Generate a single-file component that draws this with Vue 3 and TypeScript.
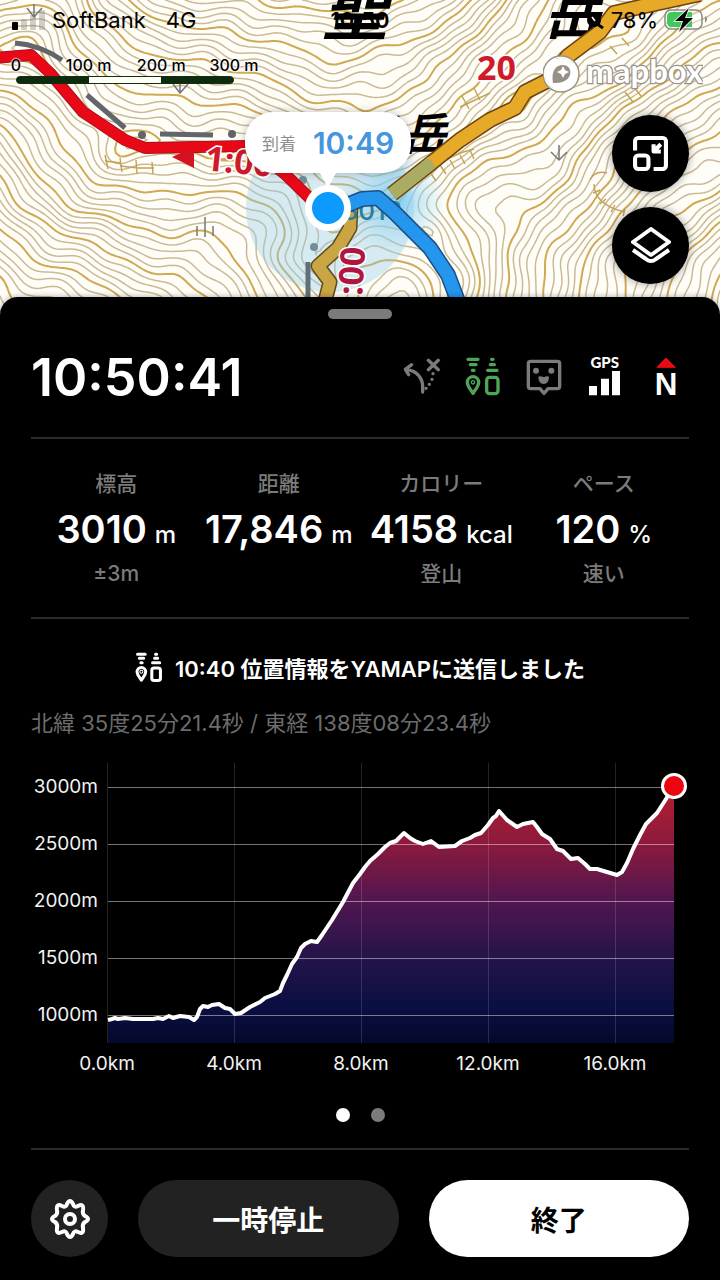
<script setup lang="ts">
type Point = [number, number]

interface Stat {
  label: string
  value: string
  unit: string
  note: string
}

const stats: Stat[] = [
  { label: '標高', value: '3010', unit: 'm', note: '±3m' },
  { label: '距離', value: '17,846', unit: 'm', note: '' },
  { label: 'カロリー', value: '4158', unit: 'kcal', note: '登山' },
  { label: 'ペース', value: '120', unit: '%', note: '速い' },
]

/* Elevation profile */
const profile: Point[] = [
  [108, 1020], [112, 1019], [115, 1018], [118, 1019], [125, 1018], [133, 1019], [153, 1019], [158, 1018], [163, 1019],
  [169, 1016], [173, 1018], [180, 1016], [189, 1017], [194, 1020], [197, 1017], [200, 1009], [203, 1006],
  [208, 1007], [212, 1005], [219, 1004], [225, 1008], [230, 1009], [235, 1014], [241, 1013], [250, 1007],
  [260, 1002], [265, 998], [275, 994], [280, 991], [283, 983], [287, 975], [292, 964], [297, 957],
  [301, 948], [305, 944], [311, 941], [317, 942], [322, 935], [332, 920], [343, 902], [353, 883],
  [360, 874], [365, 867], [370, 861], [378, 854], [385, 847], [390, 843], [396, 841], [404, 833],
  [410, 838], [415, 841], [423, 844], [431, 841], [439, 847], [455, 846], [462, 841], [470, 838],
  [475, 835], [481, 833], [488, 825], [493, 818], [496, 816], [499, 811], [507, 820], [517, 827],
  [523, 824], [533, 822], [537, 827], [542, 834], [550, 839], [557, 849], [563, 851], [571, 859],
  [578, 858], [585, 864], [590, 869], [597, 869], [617, 875], [622, 872], [627, 863], [633, 849],
  [640, 835], [646, 824], [657, 813], [666, 799], [674, 786],
]
const profileLine = 'M' + profile.map((p) => p.join(' ')).join('L')
const profileArea = profileLine + 'V1043H108Z'
const yTicks = [3000, 2500, 2000, 1500, 1000].map((m, i) => ({ text: `${m}m`, y: 787 + i * 57 }))
const xTicks = [0, 4, 8, 12, 16].map((km, i) => ({ text: `${km.toFixed(1)}km`, x: 107 + i * 127 }))

/* Contour lines: level curves of a terrain that falls away from the ridges */
const ridges: Point[][] = [
  [[-60, 40], [30, 55], [140, 150], [250, 150], [335, 205], [400, 190], [515, 108], [610, 20], [760, -50]],
  [[345, 210], [320, 265], [335, 340]],
  [[400, 190], [430, 240], [470, 330]],
]

function segmentDistance(x: number, y: number, a: Point, b: Point): number {
  const dx = b[0] - a[0]
  const dy = b[1] - a[1]
  const t = Math.max(0, Math.min(1, ((x - a[0]) * dx + (y - a[1]) * dy) / (dx * dx + dy * dy)))
  return Math.hypot(x - a[0] - t * dx, y - a[1] - t * dy)
}

function terrain(px: number, py: number): number {
  const x = px + 8 * Math.sin(py / 25 + px / 70) + 2 * Math.sin(py / 8 + 1)
  const y = py + 8 * Math.sin(px / 27 + py / 60) + 2 * Math.sin(px / 9 + py / 14)
  let sum = 0
  ridges.forEach((ridge, r) => {
    for (let i = 1; i < ridge.length; i++) {
      sum += Math.exp(-(segmentDistance(x, y, ridge[i - 1], ridge[i]) + (r ? 16 : 0)) / 16)
    }
  })
  const rough = 5 * Math.sin(px / 36 + 2) * Math.cos(py / 31) + 2 * Math.sin(px / 14 + py / 18) + Math.sin(px / 7 - py / 9)
  return -16 * Math.log(sum) + rough
}

function contours(): { thin: string; thick: string } {
  const step = 4
  const gap = 7
  const cols = 181
  const rows = 81
  const grid: number[][] = []
  for (let j = 0; j < rows; j++) {
    grid.push(Array.from({ length: cols }, (_, i) => terrain(i * step, j * step)))
  }
  let thin = ''
  let thick = ''
  for (let j = 0; j < rows - 1; j++) {
    for (let i = 0; i < cols - 1; i++) {
      const v = [grid[j][i], grid[j][i + 1], grid[j + 1][i + 1], grid[j + 1][i]]
      const c: Point[] = [[i, j], [i + 1, j], [i + 1, j + 1], [i, j + 1]]
      const low = Math.ceil(Math.min(...v) / gap)
      const high = Math.floor(Math.max(...v) / gap)
      for (let n = low; n <= high; n++) {
        const hits: string[] = []
        for (let e = 0; e < 4; e++) {
          const f = (e + 1) % 4
          if (v[e] < n * gap !== v[f] < n * gap) {
            const t = (n * gap - v[e]) / (v[f] - v[e])
            const x = (c[e][0] + t * (c[f][0] - c[e][0])) * step
            const y = (c[e][1] + t * (c[f][1] - c[e][1])) * step
            hits.push(`${x.toFixed(1)} ${y.toFixed(1)}`)
          }
        }
        for (let h = 0; h + 1 < hits.length; h += 2) {
          const part = `M${hits[h]}L${hits[h + 1]}`
          if (n % 5 === 0) thick += part
          else thin += part
        }
      }
    }
  }
  return { thin, thick }
}
const lines = contours()

const orangeRoute = 'M700 -6L640 7L614 13L600 32L568 56L549 80L525 92L515 108L490 120L460 140L425 168L392 194'
const southRoute = 'M351 205L350 228L338 248L318 266L330 282L324 305'
const blueRoute = 'M340 208L362 199L378 198L395 213L413 231L430 248L448 275L462 312'
const redRoute = 'M-5 58L31 55L50 73L83 112L125 140L145 148L250 146L285 174L330 218'
</script>

<template>
  <main class="screen">
    <section class="map" aria-label="地図">
      <svg class="terrain" viewBox="0 0 720 320" preserveAspectRatio="xMidYMin slice">
        <defs>
          <radialGradient id="heading">
            <stop offset="0" stop-color="#6fc8f5" stop-opacity="0.8" />
            <stop offset="1" stop-color="#8fd4f7" stop-opacity="0" />
          </radialGradient>
        </defs>
        <rect width="720" height="320" fill="#fffdf8" />
        <path :d="lines.thin" class="contour" stroke="#cbbb94" stroke-width="1.5" />
        <path :d="lines.thick" class="contour" stroke="#d0a955" stroke-width="2" />
        <g fill="none" stroke="#c5a050" stroke-width="1.4">
          <path d="M590 180q5-10 17-7M594 184q0 20 30 28M600 190l-7 3M606 199l-6 5M615 205l-4 7M625 209l-2 7" />
          <path d="M430 172l6 9M440 165l6 9M450 160l5 9M460 155l5 9M470 150l4 9M430 172q20-18 44-23M462 96l7 13M474 88l6 12M460 107l30-14" />
          <path d="M105 155l3 14M120 158l2 14M136 160l1 14M152 162l1 12M105 161l16 2M120 166l18 2M136 168l18 0" />
          <path d="M625 92l8 10M633 86l8 10M560 60l7 8M610 46l7 8M622 38l7 8" />
        </g>
        <g fill="none" stroke="#77777a" stroke-width="1.5">
          <path d="M34 4v13M27 8l7 9l8-9M180 76v17M173 84l7 9l8-9M559 145v15M551 152l8 8l8-8M197 226v10M205 217v20M213 226v10" />
        </g>
        <g fill="none" stroke="#62666a" stroke-width="5">
          <path d="M15 43Q40 45 62 60M87 95L125 128M160 134L213 135" />
        </g>
        <g fill="#62666a">
          <circle cx="142" cy="135" r="4" /><circle cx="232" cy="134" r="4" />
          <circle cx="303" cy="180" r="4" /><circle cx="314" cy="247" r="4" />
        </g>
        <circle cx="330" cy="208" r="84" fill="#93cbe6" fill-opacity="0.38" />
        <circle cx="395" cy="202" r="52" fill="url(#heading)" />
        <g class="place">
          <text x="322" y="34" font-size="66">聖</text>
          <text x="544" y="34" font-size="56">岳</text>
          <text x="298" y="150" font-size="44">前</text>
          <text x="350" y="150" font-size="44">聖</text>
          <text x="402" y="150" font-size="44">岳</text>
        </g>
        <path d="M308 262V300" stroke="#607078" stroke-width="5" />
        <g fill="none" stroke-linejoin="round">
          <path :d="redRoute" stroke="#a81220" stroke-width="12" />
          <path :d="redRoute" stroke="#e90816" stroke-width="10" />
          <path :d="orangeRoute" stroke="#70430e" stroke-width="16" />
          <path :d="orangeRoute" stroke="#e7a928" stroke-width="13" />
          <path d="M432 162L425 168L392 194" stroke="#a9ac62" stroke-width="13" />
          <path :d="southRoute" stroke="#5f4a1c" stroke-width="15" />
          <path :d="southRoute" stroke="#c9a544" stroke-width="12" />
        </g>
        <text x="342" y="220" class="height">3013</text>
        <g fill="none" stroke-linejoin="round">
          <path :d="blueRoute" stroke="#1c4f82" stroke-width="16" />
          <path :d="blueRoute" stroke="#2596ee" stroke-width="13" />
        </g>
        <path d="M172 157L194 147V168Z" fill="#d5121f" />
        <g class="time">
          <text x="477" y="80">20</text>
          <text transform="translate(204 170) rotate(6)">1:00</text>
          <text transform="translate(362 296) rotate(-86)" class="crimson">:00</text>
        </g>
      </svg>

      <header class="status">
        <svg class="signal" viewBox="0 0 34 22" aria-hidden="true">
          <rect x="0" y="13" width="6" height="8" rx="1" />
          <g fill="#777" fill-opacity="0.35">
            <rect x="9" y="10" width="6" height="11" rx="1" />
            <rect x="18" y="6" width="6" height="15" rx="1" />
            <rect x="27" y="1" width="6" height="20" rx="1" />
          </g>
        </svg>
        <span>SoftBank</span>
        <span class="network">4G</span>
        <span class="clock-small">10:50</span>
        <svg class="lock" viewBox="0 0 18 22" aria-hidden="true">
          <circle cx="8" cy="11" r="7" />
          <path d="M11 15L17 19" stroke="#000" stroke-width="3" />
          <path d="M6 8l3 4" stroke="#fff" stroke-width="1.5" />
        </svg>
        <span class="percent">78%</span>
        <svg class="battery" viewBox="0 0 44 24" aria-hidden="true">
          <rect x="1" y="2" width="37" height="19" rx="6" fill="#fff" fill-opacity="0.4" stroke="#8b8b80" stroke-width="1.5" />
          <path d="M8 4H28V19H8Q3 19 3 14V9Q3 4 8 4Z" fill="#42c75c" />
          <path d="M41 8Q45 11 41 15Z" fill="#8b8b80" />
          <path d="M25 0L11 13H19L15 24L29 10H21Z" stroke="#fff" stroke-width="1.5" paint-order="stroke" />
        </svg>
      </header>

      <div class="scale">
        <div class="scale-labels"><span>0</span><span>100 m</span><span>200 m</span><span>300 m</span></div>
        <div class="scale-bar"><i></i><i></i><i></i></div>
      </div>

      <a class="mapbox" href="#mapbox" aria-label="mapbox">
        <svg viewBox="0 0 160 44">
          <circle cx="18" cy="22" r="16" fill="#fff" />
          <circle cx="18" cy="22" r="17" fill="none" stroke="#fff" stroke-width="2" />
          <circle cx="18" cy="22" r="18" fill="none" stroke="#9c9482" stroke-width="1.5" />
          <path d="M10 31C8 20 12 13 20 13C27 13 29 20 26 25C23 30 17 31 10 31Z" fill="#969089" />
          <path d="M20 14L22 18L26 20L22 22L20 26L18 22L14 20L18 18Z" fill="#fff" />
          <text x="43" y="31">mapbox</text>
        </svg>
      </a>

      <div class="map-tools">
        <button type="button" aria-label="縮小表示">
          <svg width="35" height="35" viewBox="0 0 34 34">
            <path d="M2 14V5a3 3 0 0 1 3-3H29a3 3 0 0 1 3 3V29a3 3 0 0 1-3 3H20" />
            <rect x="2" y="19" width="13" height="13" rx="3" />
            <path d="M20 8V15H27M20 15L27 8" />
          </svg>
        </button>
        <button type="button" aria-label="レイヤー">
          <svg width="40" height="37" viewBox="0 0 40 37">
            <path d="M20 2L38 15L20 28L2 15Z" />
            <path d="M2 23L15 32Q20 36 25 32L38 23" />
          </svg>
        </button>
      </div>

      <div class="arrival">
        <div class="bubble"><span>到着</span><strong>10:49</strong></div>
        <div class="marker"></div>
      </div>
    </section>

    <section class="sheet">
      <div class="handle"></div>

      <div class="top-row">
        <time class="clock">10:50:41</time>
        <div class="icons">
          <svg viewBox="0 0 138 138" class="line gray">
            <path d="M71 114V98C71 70 52 50 22 47M38 32L19 46L29 62" />
            <path d="M88 19L118 47M118 19L88 47" />
            <path d="M102 59v.1M99 76v.1M91 91v.1M81 103v.1" />
          </svg>
          <svg viewBox="0 0 138 138" class="line green">
            <path d="M24 16H54M31 32H48M37 49H42M95 16h4M91 32H103M83 49H111" />
            <path d="M39 118C32 106 22 98 22 85A17 17 0 0 1 56 85C56 98 46 106 39 118Z" />
            <circle cx="39" cy="85" r="2" />
            <rect x="80" y="70" width="34" height="49" rx="9" />
          </svg>
          <svg viewBox="0 0 138 138" class="line gray">
            <path d="M29 22H109Q116 22 116 29V97Q116 104 109 104H81L69 118L57 104H29Q22 104 22 97V29Q22 22 29 22Z" />
            <g fill="currentColor" stroke="none">
              <circle cx="45" cy="50" r="9" /><circle cx="91" cy="50" r="9" />
              <path d="M52 68Q58 64 68 70Q78 64 84 68Q84 88 68 90Q52 88 52 68Z" />
            </g>
          </svg>
          <svg viewBox="0 0 138 138" fill="#fff">
            <text x="68" y="43" text-anchor="middle" class="gps">GPS</text>
            <path d="M21 96H45V124H21ZM57 74H81V124H57ZM90 51H114V124H90Z" />
          </svg>
          <svg viewBox="0 0 138 138" fill="#fff">
            <path d="M69 12L42 40H97Z" fill="#e80b12" stroke="#e80b12" stroke-width="3" stroke-linejoin="round" />
            <text x="69" y="124" text-anchor="middle" class="north">N</text>
          </svg>
        </div>
      </div>

      <div class="stats">
        <div v-for="s in stats" :key="s.label" class="stat">
          <div class="stat-label">{{ s.label }}</div>
          <div class="stat-value"><b>{{ s.value }}</b><span>{{ s.unit }}</span></div>
          <div class="stat-label">{{ s.note }}</div>
        </div>
      </div>

      <div class="message">
        <svg viewBox="14 8 110 120" class="line">
          <path d="M24 16H54M31 32H48M37 49H42M95 16h4M91 32H103M83 49H111" />
          <path d="M39 118C32 106 22 98 22 85A17 17 0 0 1 56 85C56 98 46 106 39 118Z" />
          <circle cx="39" cy="85" r="2" />
          <rect x="80" y="70" width="34" height="49" rx="9" />
        </svg>
        <span>10:40 位置情報をYAMAPに送信しました</span>
      </div>
      <div class="coords">北緯 35度25分21.4秒 / 東経 138度08分23.4秒</div>

      <svg class="chart" viewBox="31 750 658 330" role="img" aria-label="標高グラフ">
        <defs>
          <linearGradient id="fill" gradientUnits="userSpaceOnUse" x1="0" y1="786" x2="0" y2="1043">
            <stop offset="0" stop-color="#b81f2c" />
            <stop offset="0.22" stop-color="#8c1a3d" />
            <stop offset="0.45" stop-color="#501650" />
            <stop offset="0.67" stop-color="#241449" />
            <stop offset="0.85" stop-color="#0b0f43" />
            <stop offset="1" stop-color="#030a2c" />
          </linearGradient>
        </defs>
        <path :d="profileArea" fill="url(#fill)" />
        <g v-for="t in xTicks" :key="t.text">
          <path :d="`M${t.x + 0.5} 763V1043`" stroke="#fff" stroke-opacity="0.14" />
          <text :x="t.x" y="1070" text-anchor="middle">{{ t.text }}</text>
        </g>
        <g v-for="t in yTicks" :key="t.text">
          <path :d="`M108 ${t.y + 0.5}H674`" stroke="#fff" stroke-opacity="0.45" />
          <text x="98" :y="t.y + 6" text-anchor="end">{{ t.text }}</text>
        </g>
        <path :d="profileLine" fill="none" stroke="#fff" stroke-width="4" stroke-linejoin="round" />
        <circle cx="674" cy="786" r="11.5" fill="#eb0511" stroke="#fff" stroke-width="3" />
      </svg>

      <div class="dots"><i class="on"></i><i></i></div>

      <div class="actions">
        <button type="button" class="settings" aria-label="設定">
          <svg viewBox="0 0 40 40">
            <path d="M17 5Q20 -1 23 5Q24 9 28 7Q34 4 33 11Q32 15 35 17Q41 20 35 23Q32 25 33 29Q34 36 28 33Q24 31 23 35Q20 41 17 35Q16 31 12 33Q6 36 7 29Q8 25 5 23Q-1 20 5 17Q8 15 7 11Q6 4 12 7Q16 9 17 5Z" />
            <circle cx="20" cy="20" r="5" />
          </svg>
        </button>
        <button type="button" class="pause">一時停止</button>
        <button type="button" class="finish">終了</button>
      </div>
    </section>
  </main>
</template>

<style>
body {
  background: #000;
}
</style>

<style scoped>
.screen {
  min-height: 100vh;
  background: #000;
  color: #fff;
  font-family: Inter, "Noto Sans CJK JP", sans-serif;
}
button {
  border: 0;
  padding: 0;
  font: inherit;
  cursor: pointer;
}
.map {
  position: relative;
  height: 317px;
  overflow: hidden;
  color: #000;
}
.terrain {
  display: block;
  width: 100%;
  height: 100%;
}
.contour {
  fill: none;
  stroke-linecap: round;
}
.place {
  font-family: "Noto Sans CJK JP", sans-serif;
  font-weight: 700;
  font-style: italic;
}
.height {
  font-size: 26px;
  font-weight: 500;
  fill: #287e9c;
}
.time {
  font-family: "Open Sans", sans-serif;
  font-weight: 700;
  font-size: 34px;
  fill: #cf1a2c;
  stroke: #fff;
  stroke-width: 3px;
  paint-order: stroke;
}
.crimson {
  fill: #b01541;
}
.status {
  position: absolute;
  inset: 0 12px auto 12px;
  display: flex;
  align-items: center;
  height: 40px;
  font-size: 22px;
}
.signal {
  width: 34px;
  height: 22px;
  margin-right: 6px;
}
.network {
  margin-left: 20px;
}
.clock-small {
  position: absolute;
  left: 50%;
  transform: translateX(-50%);
  font-weight: 600;
}
.lock {
  width: 18px;
  height: 22px;
  margin-left: auto;
}
.percent {
  margin: 0 6px 0 7px;
}
.battery {
  width: 44px;
  height: 24px;
}
.scale {
  position: absolute;
  top: 55px;
  left: 16px;
  width: 218px;
}
.scale-labels {
  display: flex;
  justify-content: space-between;
  margin: 0 -36px;
  font-size: 16px;
  font-weight: 500;
  line-height: 20px;
  text-shadow: 0 0 2px #fff, 0 0 2px #fff, 0 0 2px #fff;
}
.scale-labels span {
  width: 72px;
  text-align: center;
}
.scale-bar {
  display: grid;
  grid-template-columns: repeat(3, 1fr);
  box-sizing: border-box;
  height: 8px;
  margin-top: 1px;
  border: 1px solid #10300f;
  border-radius: 4px;
  background: #0e2b0d;
  overflow: hidden;
}
.scale-bar i:nth-child(2) {
  background: #fffdf8;
}
.mapbox {
  position: absolute;
  top: 52px;
  right: 17px;
}
.mapbox svg {
  display: block;
  width: 160px;
  height: 44px;
}
.mapbox text {
  font-family: Lato, sans-serif;
  font-weight: 700;
  font-size: 33px;
  fill: #fff;
  stroke: #96918a;
  stroke-width: 2.5px;
  paint-order: stroke;
}
.map-tools {
  position: absolute;
  top: 115px;
  right: 31px;
  display: grid;
  gap: 15px;
}
.map-tools button {
  display: grid;
  place-items: center;
  width: 77px;
  height: 77px;
  border-radius: 50%;
  background: #000;
  box-shadow: 0 0 10px rgba(0, 0, 0, 0.4);
}
.map-tools svg {
  fill: none;
  stroke: #fff;
  stroke-width: 4;
  stroke-linejoin: round;
}
.arrival {
  position: absolute;
  top: 112px;
  left: 328px;
  display: grid;
  justify-items: center;
  gap: 12px;
  transform: translateX(-50%);
}
.bubble {
  position: relative;
  display: flex;
  align-items: center;
  justify-content: center;
  gap: 17px;
  width: 166px;
  height: 61px;
  border-radius: 28px;
  background: #fff;
  box-shadow: 0 0 8px rgba(0, 0, 0, 0.25);
}
.bubble::after {
  content: "";
  position: absolute;
  top: 100%;
  left: 50%;
  margin-left: -8px;
  border: 8px solid transparent;
  border-top: 15px solid #fff;
  border-bottom: 0;
}
.bubble span {
  font-size: 17px;
  color: #8e8e8e;
}
.bubble strong {
  font-size: 30px;
  font-weight: 600;
  color: #4596dc;
}
.marker {
  box-sizing: border-box;
  width: 46px;
  height: 46px;
  border: 7px solid #fff;
  border-radius: 50%;
  background: #0a9bfc;
}
.sheet {
  position: relative;
  margin-top: -20px;
  padding: 12px 31px 23px;
  border-radius: 18px 18px 0 0;
  background: #000;
  box-shadow: 0 0 6px rgba(0, 0, 0, 0.35);
}
.handle {
  width: 64px;
  height: 10px;
  margin: 0 auto;
  border-radius: 5px;
  background: #7b7b7b;
}
.top-row {
  display: flex;
  align-items: center;
  justify-content: space-between;
  height: 116px;
  padding-bottom: 2px;
  border-bottom: 2px solid #2b2b2b;
}
.clock {
  font-size: 52px;
  font-weight: 600;
}
.icons {
  display: flex;
  gap: 15px;
}
.icons svg {
  width: 46px;
  height: 46px;
}
.line {
  fill: none;
  stroke: currentColor;
  stroke-width: 10;
  stroke-linecap: round;
  stroke-linejoin: round;
}
.gray {
  color: #7b7b7b;
}
.green {
  color: #4fa557;
}
.gps {
  font-family: Lato, sans-serif;
  font-weight: 900;
  font-size: 45px;
}
.north {
  font-family: "Liberation Sans", sans-serif;
  font-weight: 700;
  font-size: 94px;
}
.stats {
  display: grid;
  grid-template-columns: repeat(4, 1fr);
  padding: 30px 4px 28px;
  border-bottom: 2px solid #2b2b2b;
}
.stat {
  display: grid;
  gap: 6px;
  justify-items: center;
  white-space: nowrap;
}
.stat-label {
  height: 30px;
  font-size: 21px;
  font-weight: 500;
  line-height: 30px;
  color: #7b7b7b;
}
.stat-value {
  display: flex;
  align-items: baseline;
  gap: 8px;
  height: 48px;
  font-size: 24px;
  font-weight: 500;
  line-height: 48px;
}
.stat-value b {
  font-size: 38px;
  font-weight: 600;
}
.message {
  display: flex;
  align-items: center;
  justify-content: center;
  gap: 12px;
  height: 32px;
  margin-top: 32px;
  font-size: 22px;
  font-weight: 600;
}
.message svg {
  width: 28px;
  height: 31px;
  stroke-width: 12;
}
.coords {
  margin-top: 25px;
  font-size: 22px;
  line-height: 30px;
  color: #6c6c6c;
}
.chart {
  display: block;
  width: 100%;
  margin-top: 12px;
}
.chart text {
  font-size: 19px;
  fill: #f2f2f2;
}
.dots {
  display: flex;
  justify-content: center;
  gap: 21px;
  padding: 28px 0 26px;
  border-bottom: 2px solid #2b2b2b;
}
.dots i {
  width: 14px;
  height: 14px;
  border-radius: 50%;
  background: #7b7b7b;
}
.dots .on {
  background: #fff;
}
.actions {
  display: grid;
  grid-template-columns: 77px 1fr 1fr;
  gap: 30px;
  margin-top: 30px;
}
.actions button {
  display: grid;
  place-items: center;
  height: 77px;
  border-radius: 39px;
  background: #222;
  color: #fff;
  font-size: 28px;
  font-weight: 700;
}
.actions .finish {
  background: #fff;
  color: #000;
}
.settings svg {
  width: 40px;
  height: 40px;
  fill: none;
  stroke: #fff;
  stroke-width: 4;
  stroke-linejoin: round;
}
</style>
